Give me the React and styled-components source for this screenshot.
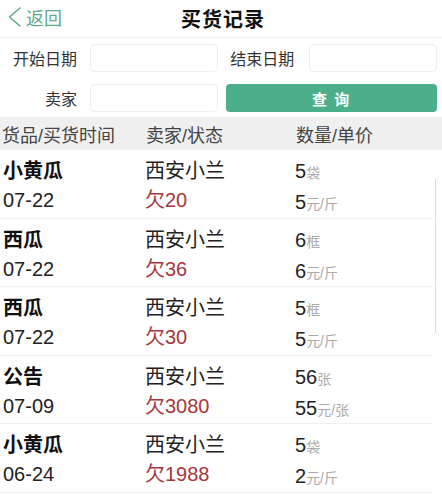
import React from 'react';
import styled, { createGlobalStyle } from 'styled-components';

const GlobalStyle = createGlobalStyle`
  html, body {
    margin: 0;
    padding: 0;
    background: #fff;
  }
  body {
    font-family: "Liberation Sans", "Noto Sans CJK SC", sans-serif;
    color: #222;
  }
`;

const records = [
  { name: '小黄瓜', date: '07-22', seller: '西安小兰', owe: '欠20', qty: '5', qtyUnit: '袋', price: '5', priceUnit: '元/斤' },
  { name: '西瓜', date: '07-22', seller: '西安小兰', owe: '欠36', qty: '6', qtyUnit: '框', price: '6', priceUnit: '元/斤' },
  { name: '西瓜', date: '07-22', seller: '西安小兰', owe: '欠30', qty: '5', qtyUnit: '框', price: '5', priceUnit: '元/斤' },
  { name: '公告', date: '07-09', seller: '西安小兰', owe: '欠3080', qty: '56', qtyUnit: '张', price: '55', priceUnit: '元/张' },
  { name: '小黄瓜', date: '06-24', seller: '西安小兰', owe: '欠1988', qty: '5', qtyUnit: '袋', price: '2', priceUnit: '元/斤' },
];

export default function App() {
  return (
    <Page>
      <GlobalStyle />
      <NavBar>
        <BackButton>
          <svg width="15" height="22" viewBox="0 0 15 22" fill="none">
            <path d="M13 2 L2.5 11 L13 20" stroke="#5fa98d" strokeWidth="1.6" strokeLinecap="round" strokeLinejoin="round" />
          </svg>
          <span>返回</span>
        </BackButton>
        <Title>买货记录</Title>
      </NavBar>

      <Filter>
        <Label>开始日期</Label>
        <Field />
        <Label align="left">结束日期</Label>
        <Field />
        <Label>卖家</Label>
        <Field />
        <QueryButton>查 询</QueryButton>
      </Filter>

      <TableHead>
        <HeadCell>货品/买货时间</HeadCell>
        <HeadCell>卖家/状态</HeadCell>
        <HeadCell>数量/单价</HeadCell>
      </TableHead>

      <List>
        {records.map((r, i) => (
          <Row key={i}>
            <Cell>
              <Name>{r.name}</Name>
              <Plain>{r.date}</Plain>
            </Cell>
            <Cell>
              <Plain>{r.seller}</Plain>
              <Owe>{r.owe}</Owe>
            </Cell>
            <Cell>
              <Plain>{r.qty}<Unit>{r.qtyUnit}</Unit></Plain>
              <Plain>{r.price}<Unit>{r.priceUnit}</Unit></Plain>
            </Cell>
          </Row>
        ))}
        <ScrollEdge />
      </List>
    </Page>
  );
}

const Page = styled.div`
  width: 442px;
  height: 495px;
  overflow: hidden;
  background: #fff;
`;

const NavBar = styled.header`
  position: relative;
  height: 37px;
  display: flex;
  align-items: center;
  justify-content: center;
  border-bottom: 1px solid #f0f0f0;
`;

const BackButton = styled.div`
  position: absolute;
  left: 7px;
  top: 6px;
  display: flex;
  align-items: center;
  gap: 4px;
  color: #5fa98d;
  font-family: "Noto Sans CJK SC", sans-serif;
  font-size: 18px;
  line-height: 22px;
`;

const Title = styled.h1`
  margin: 0;
  font-family: "Noto Sans CJK SC", sans-serif;
  font-size: 20px;
  font-weight: 700;
  color: #111;
  letter-spacing: 1px;
  padding-left: 4px;
`;

const Filter = styled.div`
  display: grid;
  grid-template-columns: 77px 128px 66px 128px;
  grid-template-rows: 28px 28px;
  column-gap: 12.67px;
  row-gap: 12px;
  padding: 6px 0 5px 0;
  align-items: center;
`;

const Label = styled.div`
  text-align: ${({ align }) => align || 'right'};
  font-family: "Noto Sans CJK SC", sans-serif;
  font-size: 16px;
  color: #333;
  line-height: 28px;
  white-space: nowrap;
`;

const Field = styled.div`
  height: 28px;
  box-sizing: border-box;
  border: 1px solid #eeeeee;
  border-radius: 5px;
  background: #fff;
`;

const QueryButton = styled.button`
  grid-column: 3 / span 2;
  margin-left: -4px;
  height: 28px;
  border: none;
  border-radius: 4px;
  background: #4bb08a;
  color: #fff;
  font-family: "Noto Sans CJK SC", sans-serif;
  font-size: 15px;
  font-weight: 700;
  letter-spacing: 2px;
`;

const TableHead = styled.div`
  display: grid;
  grid-template-columns: 144px 150px 1fr;
  height: 33px;
  align-items: center;
  background: #f0f0f0;
  padding-left: 2px;
`;

const HeadCell = styled.div`
  font-size: 18px;
  color: #444;
`;

const List = styled.div`
  position: relative;
`;

const Row = styled.div`
  display: grid;
  grid-template-columns: 142px 150px 1fr;
  height: 68.5px;
  padding: 7px 0 0 3px;
  box-sizing: border-box;
  margin-right: 9px;
  border-bottom: 1px solid #f0f0f0;
`;

const Cell = styled.div`
  display: flex;
  flex-direction: column;
`;

const Plain = styled.div`
  font-size: 20px;
  line-height: 29px;
  color: #222;
  white-space: nowrap;
`;

const Name = styled(Plain)`
  font-weight: 700;
  color: #111;
`;

const Owe = styled(Plain)`
  color: #a8363a;
`;

const Unit = styled.span`
  font-size: 14px;
  color: #aaa;
`;

const ScrollEdge = styled.div`
  position: absolute;
  right: 3px;
  top: 27px;
  width: 3px;
  height: 157px;
  border-left: 1px solid #d8d8d8;
  border-top-left-radius: 4px;
  border-bottom-left-radius: 4px;
`;
